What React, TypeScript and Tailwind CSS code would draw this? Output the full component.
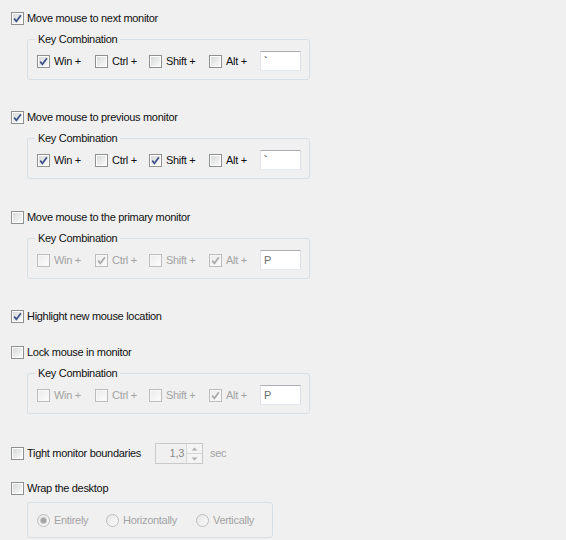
import React from "react";

const font = "font-['Liberation_Sans',Arial,sans-serif]";

type BoxProps = { checked?: boolean; disabled?: boolean };

const CheckBox = ({ checked, disabled }: BoxProps) => {
  return (
    <span
      className={
        "relative flex h-[13px] w-[13px] shrink-0 border p-[1px] " +
        (disabled ? "border-[#bcbcbc] bg-[#f7f7f7]" : "border-[#8e8f8f] bg-white")
      }
    >
      <span
        className={
          "block h-full w-full bg-gradient-to-br " +
          (disabled ? "from-[#ececec] to-[#fbfbfb]" : "from-[#d8d9da] to-[#fafafa]")
        }
      />
      {checked && (
        <svg className="absolute left-0 top-0" width="11" height="11" viewBox="0 0 11 11">
          <path
            d="M2.2 5.6 L4.4 8.3 L8.9 2.2"
            fill="none"
            stroke={disabled ? "#a9a9a9" : "#3d5287"}
            strokeWidth="1.7"
            strokeLinejoin="miter"
          />
        </svg>
      )}
    </span>
  );
};

const Radio = ({ checked }: { checked?: boolean }) => (
  <span className="relative flex h-[13px] w-[13px] shrink-0 items-center justify-center rounded-full border border-[#bcbcbc] bg-gradient-to-br from-[#e6e6e6] to-[#fbfbfb]">
    {checked && <span className="h-[5px] w-[5px] rounded-full bg-[#a2a2a2] ring-1 ring-[#c8c8c8]" />}
  </span>
);

const Option = ({ label, checked, disabled }: { label: string; checked?: boolean; disabled?: boolean }) => (
  <div className="flex h-[18px] items-center gap-[3px]">
    <CheckBox checked={checked} disabled={disabled} />
    <span className={disabled ? "text-[#a3a3a3]" : "text-[#111]"}>{label}</span>
  </div>
);

type Combo = { win: boolean; ctrl: boolean; shift: boolean; alt: boolean; key: string };

const KeyGroup = ({ combo, disabled }: { combo: Combo; disabled?: boolean }) => {
  const items: [string, boolean, string][] = [
    ["Win +", combo.win, "w-[58px]"],
    ["Ctrl +", combo.ctrl, "w-[54px]"],
    ["Shift +", combo.shift, "w-[60px]"],
    ["Alt +", combo.alt, "w-[51px]"],
  ];
  return (
    <fieldset className="ml-[16px] mt-[5px] w-[283px] rounded-[3px] border border-[#d5dfe5] pb-[8px] pl-[9px] pt-[5px]">
      <legend className="-ml-[2px] px-[3px] leading-[14px] text-[#111]">Key Combination</legend>
      <div className="flex h-[20px] items-center">
        {items.map(([label, on, w]) => (
          <div key={label} className={"flex items-center gap-[4px] " + w}>
            <CheckBox checked={on} disabled={disabled} />
            <span className={disabled ? "text-[#a3a3a3]" : "text-[#111]"}>{label}</span>
          </div>
        ))}
        <div className="flex h-[20px] w-[41px] items-center border border-[#abadb3] border-b-[#e3e9ef] border-l-[#e2e3ea] border-r-[#dbdfe6] bg-white pl-[3px]">
          <span className={disabled ? "text-[#6d6d6d]" : "text-black"}>{combo.key}</span>
        </div>
      </div>
    </fieldset>
  );
};

const Spinner = () => (
  <div className="flex h-[21px] w-[48px] items-center border border-[#c9c9c9] bg-[#f0f0f0]">
    <span className="flex-1 pr-[2px] text-right text-[#8a8a8a]">1,3</span>
    <div className="flex h-full w-[16px] flex-col border-l border-[#d6d6d6]">
      <div className="flex flex-1 items-center justify-center border-b border-[#d6d6d6] bg-[#f4f4f4]">
        <svg width="7" height="4" viewBox="0 0 7 4">
          <path d="M0.5 3.5 L3.5 0.5 L6.5 3.5 Z" fill="#b0b0b0" />
        </svg>
      </div>
      <div className="flex flex-1 items-center justify-center bg-[#f4f4f4]">
        <svg width="7" height="4" viewBox="0 0 7 4">
          <path d="M0.5 0.5 L3.5 3.5 L6.5 0.5 Z" fill="#b0b0b0" />
        </svg>
      </div>
    </div>
  </div>
);

export default function App() {
  return (
    <div
      className={
        "h-[540px] w-[566px] overflow-hidden bg-[#f0f0f0] pl-[11px] pt-[9px] text-[11px] tracking-[-0.3px] " + font
      }
    >
      <Option label="Move mouse to next monitor" checked />
      <KeyGroup combo={{ win: true, ctrl: false, shift: false, alt: false, key: "`" }} />

      <div className="mt-[28px]">
        <Option label="Move mouse to previous monitor" checked />
      </div>
      <KeyGroup combo={{ win: true, ctrl: false, shift: true, alt: false, key: "`" }} />

      <div className="mt-[29px]">
        <Option label="Move mouse to the primary monitor" />
      </div>
      <KeyGroup disabled combo={{ win: false, ctrl: true, shift: false, alt: true, key: "P" }} />

      <div className="mt-[28px]">
        <Option label="Highlight new mouse location" checked />
      </div>

      <div className="mt-[18px]">
        <Option label="Lock mouse in monitor" />
      </div>
      <KeyGroup disabled combo={{ win: false, ctrl: false, shift: false, alt: true, key: "P" }} />

      <div className="mt-[29px] flex h-[21px] items-center">
        <div className="w-[144px]">
          <Option label="Tight monitor boundaries" />
        </div>
        <Spinner />
        <span className="ml-[7px] text-[#a3a3a3]">sec</span>
      </div>

      <div className="mt-[15px]">
        <Option label="Wrap the desktop" />
      </div>
      <div className="ml-[16px] mt-[5px] flex h-[36px] w-[246px] items-center rounded-[3px] border border-[#d5dfe5] pl-[9px]">
        <div className="flex w-[69px] items-center gap-[4px]">
          <Radio checked />
          <span className="text-[#a3a3a3]">Entirely</span>
        </div>
        <div className="flex w-[90px] items-center gap-[4px]">
          <Radio />
          <span className="text-[#a3a3a3]">Horizontally</span>
        </div>
        <div className="flex items-center gap-[4px]">
          <Radio />
          <span className="text-[#a3a3a3]">Vertically</span>
        </div>
      </div>
    </div>
  );
}
